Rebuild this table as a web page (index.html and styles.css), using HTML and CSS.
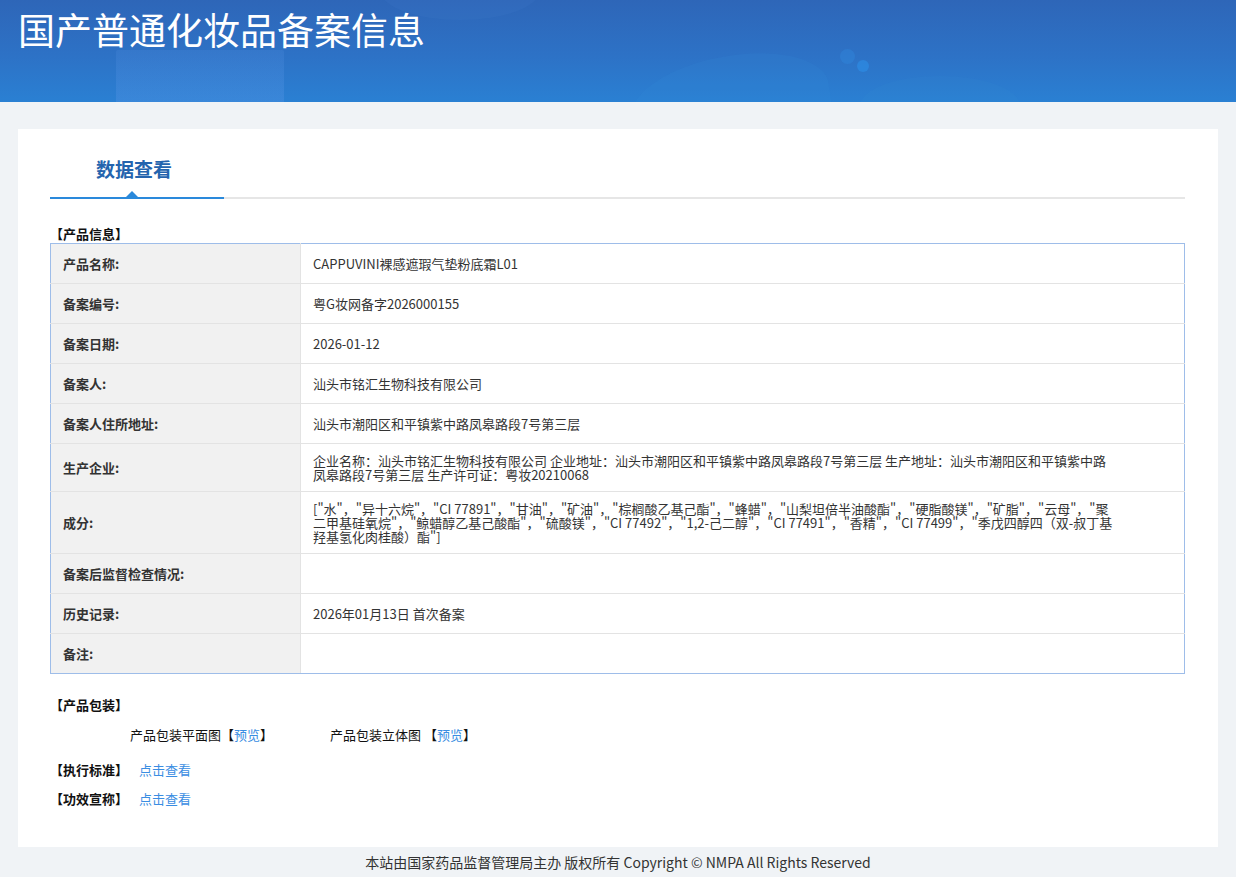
FILE: index.html
```html
<!DOCTYPE html>
<html lang="zh-CN">
<head>
<meta charset="utf-8">
<title>国产普通化妆品备案信息</title>
<link rel="stylesheet" href="styles.css">
</head>
<body>
<header class="banner">
  <span class="deco deco-rect"></span>
  <span class="deco deco-blob"></span>
  <span class="deco deco-blob2"></span>
  <span class="deco deco-dot1"></span>
  <span class="deco deco-dot2"></span>
  <span class="deco deco-arc"></span>
  <h1 class="banner-title">国产普通化妆品备案信息</h1>
</header>

<main class="panel">
  <div class="tabs">
    <div class="tab-active">数据查看</div>
    <div class="tab-rest"></div>
  </div>

  <div class="section-title">【产品信息】</div>
  <table class="info">
    <tr><th>产品名称:</th><td>CAPPUVINI裸感遮瑕气垫粉底霜L01</td></tr>
    <tr><th>备案编号:</th><td>粤G妆网备字2026000155</td></tr>
    <tr><th>备案日期:</th><td>2026-01-12</td></tr>
    <tr><th>备案人:</th><td>汕头市铭汇生物科技有限公司</td></tr>
    <tr><th>备案人住所地址:</th><td>汕头市潮阳区和平镇紫中路凤皋路段7号第三层</td></tr>
    <tr><th>生产企业:</th><td class="multi">企业名称：汕头市铭汇生物科技有限公司 企业地址：汕头市潮阳区和平镇紫中路凤皋路段7号第三层 生产地址：汕头市潮阳区和平镇紫中路凤皋路段7号第三层 生产许可证：粤妆20210068</td></tr>
    <tr><th>成分:</th><td class="multi">["水"，"异十六烷"，"CI 77891"，"甘油"，"矿油"，"棕榈酸乙基己酯"，"蜂蜡"，"山梨坦倍半油酸酯"，"硬脂酸镁"，"矿脂"，"云母"，"聚二甲基硅氧烷"，"鲸蜡醇乙基己酸酯"，"硫酸镁"，"CI 77492"，"1,2-己二醇"，"CI 77491"，"香精"，"CI 77499"，"季戊四醇四（双-叔丁基羟基氢化肉桂酸）酯"]</td></tr>
    <tr><th>备案后监督检查情况:</th><td></td></tr>
    <tr><th>历史记录:</th><td>2026年01月13日 首次备案</td></tr>
    <tr><th>备注:</th><td></td></tr>
  </table>

  <div class="section-title mt-pack">【产品包装】</div>
  <div class="pack-row">
    <div class="pack-item">产品包装平面图【<a class="link" href="#">预览</a>】</div>
    <div class="pack-item">产品包装立体图 【<a class="link" href="#">预览</a>】</div>
  </div>

  <div class="section-title mt-std">【执行标准】 <a class="link normal" href="#">点击查看</a></div>
  <div class="section-title mt-eff">【功效宣称】 <a class="link normal" href="#">点击查看</a></div>
</main>

<footer class="footer">本站由国家药品监督管理局主办 版权所有 Copyright © NMPA All Rights Reserved</footer>
</body>
</html>
```

FILE: styles.css
```css
* { box-sizing: border-box; }

html, body {
  margin: 0;
  padding: 0;
}

body {
  background: #f0f3f6;
  font-family: "Noto Sans CJK SC", "Noto Sans", sans-serif;
  color: #333;
  font-size: 13px;
}

.banner {
  position: relative;
  height: 102px;
  overflow: hidden;
  background: linear-gradient(180deg, #2e66b8 0%, #2d72c6 55%, #2a80d3 100%);
}

.deco {
  position: absolute;
  display: block;
}

.deco-rect {
  left: 116px;
  top: 50px;
  width: 168px;
  height: 60px;
  background: linear-gradient(180deg, rgba(90,150,230,0.18), rgba(90,150,230,0.35));
  border-radius: 2px;
}

.deco-blob {
  left: 630px;
  top: 56px;
  width: 200px;
  height: 90px;
  border-radius: 60% 50% 0 0;
  background: rgba(60, 150, 220, 0.12);
  transform: rotate(-8deg);
}

.deco-blob2 {
  left: 860px;
  top: 76px;
  width: 160px;
  height: 60px;
  border-radius: 50%;
  background: rgba(60, 150, 220, 0.08);
}

.deco-dot1 {
  left: 840px;
  top: 49px;
  width: 15px;
  height: 15px;
  border-radius: 50%;
  background: rgba(50, 140, 225, 0.35);
}

.deco-dot2 {
  left: 857px;
  top: 60px;
  width: 12px;
  height: 12px;
  border-radius: 50%;
  background: rgba(45, 145, 235, 0.55);
}

.deco-arc {
  left: 380px;
  top: -40px;
  width: 160px;
  height: 60px;
  border-radius: 50%;
  background: rgba(80, 140, 220, 0.1);
}

.banner-title {
  position: relative;
  margin: 0;
  padding: 6px 0 0 18px;
  font-weight: 400;
  font-size: 37px;
  line-height: 46px;
  color: #fff;
  letter-spacing: 0;
}

.panel {
  margin: 27px 18px 0 18px;
  background: #fff;
  padding: 20px 33px 40px 32px;
  min-height: 718px;
}

.tabs {
  display: flex;
  height: 50px;
}

.tab-active {
  position: relative;
  width: 174px;
  padding-left: 46px;
  line-height: 40px;
  font-size: 19px;
  font-weight: 700;
  color: #2464ae;
  border-bottom: 2px solid #2a89db;
}

.tab-active::after {
  content: "";
  position: absolute;
  left: 76px;
  bottom: 0;
  width: 0;
  height: 0;
  border-left: 6px solid transparent;
  border-right: 6px solid transparent;
  border-bottom: 6px solid #2a89db;
}

.tab-rest {
  flex: 1;
  border-bottom: 2px solid #e6e6e6;
}

.section-title {
  font-size: 13px;
  font-weight: 700;
  line-height: 17px;
  color: #111;
  margin-top: 26px;
  margin-left: 0;
}

.mt-pack { margin-top: 22px; }
.mt-std { margin-top: 18px; }
.mt-eff { margin-top: 12px; }

.info {
  width: 100%;
  border-collapse: collapse;
  border: 1px solid #9ebde9;
  margin-top: 1px;
}

.info tr {
  height: 40px;
}

.info th,
.info td {
  border: 1px solid #e3e3e3;
  font-size: 13px;
  line-height: 14px;
  vertical-align: middle;
  padding: 9px 12px;
}

.info tr:first-child th,
.info tr:first-child td { border-top-color: #9ebde9; }
.info tr:last-child th,
.info tr:last-child td { border-bottom-color: #9ebde9; }
.info th { border-left-color: #9ebde9; }
.info td { border-right-color: #9ebde9; }

.info th {
  width: 250px;
  background: #f1f1f1;
  text-align: left;
  font-weight: 700;
  color: #333;
}

.info td {
  background: #fff;
  font-weight: 400;
  color: #333;
  padding-right: 70px;
}

.info td.multi {
  padding-top: 10px;
  padding-bottom: 9px;
}

.pack-row {
  display: flex;
  margin-top: 13px;
  padding-left: 80px;
  line-height: 17px;
  font-size: 13px;
  color: #111;
}

.pack-item {
  width: 200px;
}

.link {
  color: #3a8de2;
  text-decoration: none;
  font-weight: 400;
}

.link.normal {
  margin-left: 8px;
}

.footer {
  text-align: center;
  font-size: 14px;
  line-height: 30px;
  color: #333;
  height: 30px;
}
```
